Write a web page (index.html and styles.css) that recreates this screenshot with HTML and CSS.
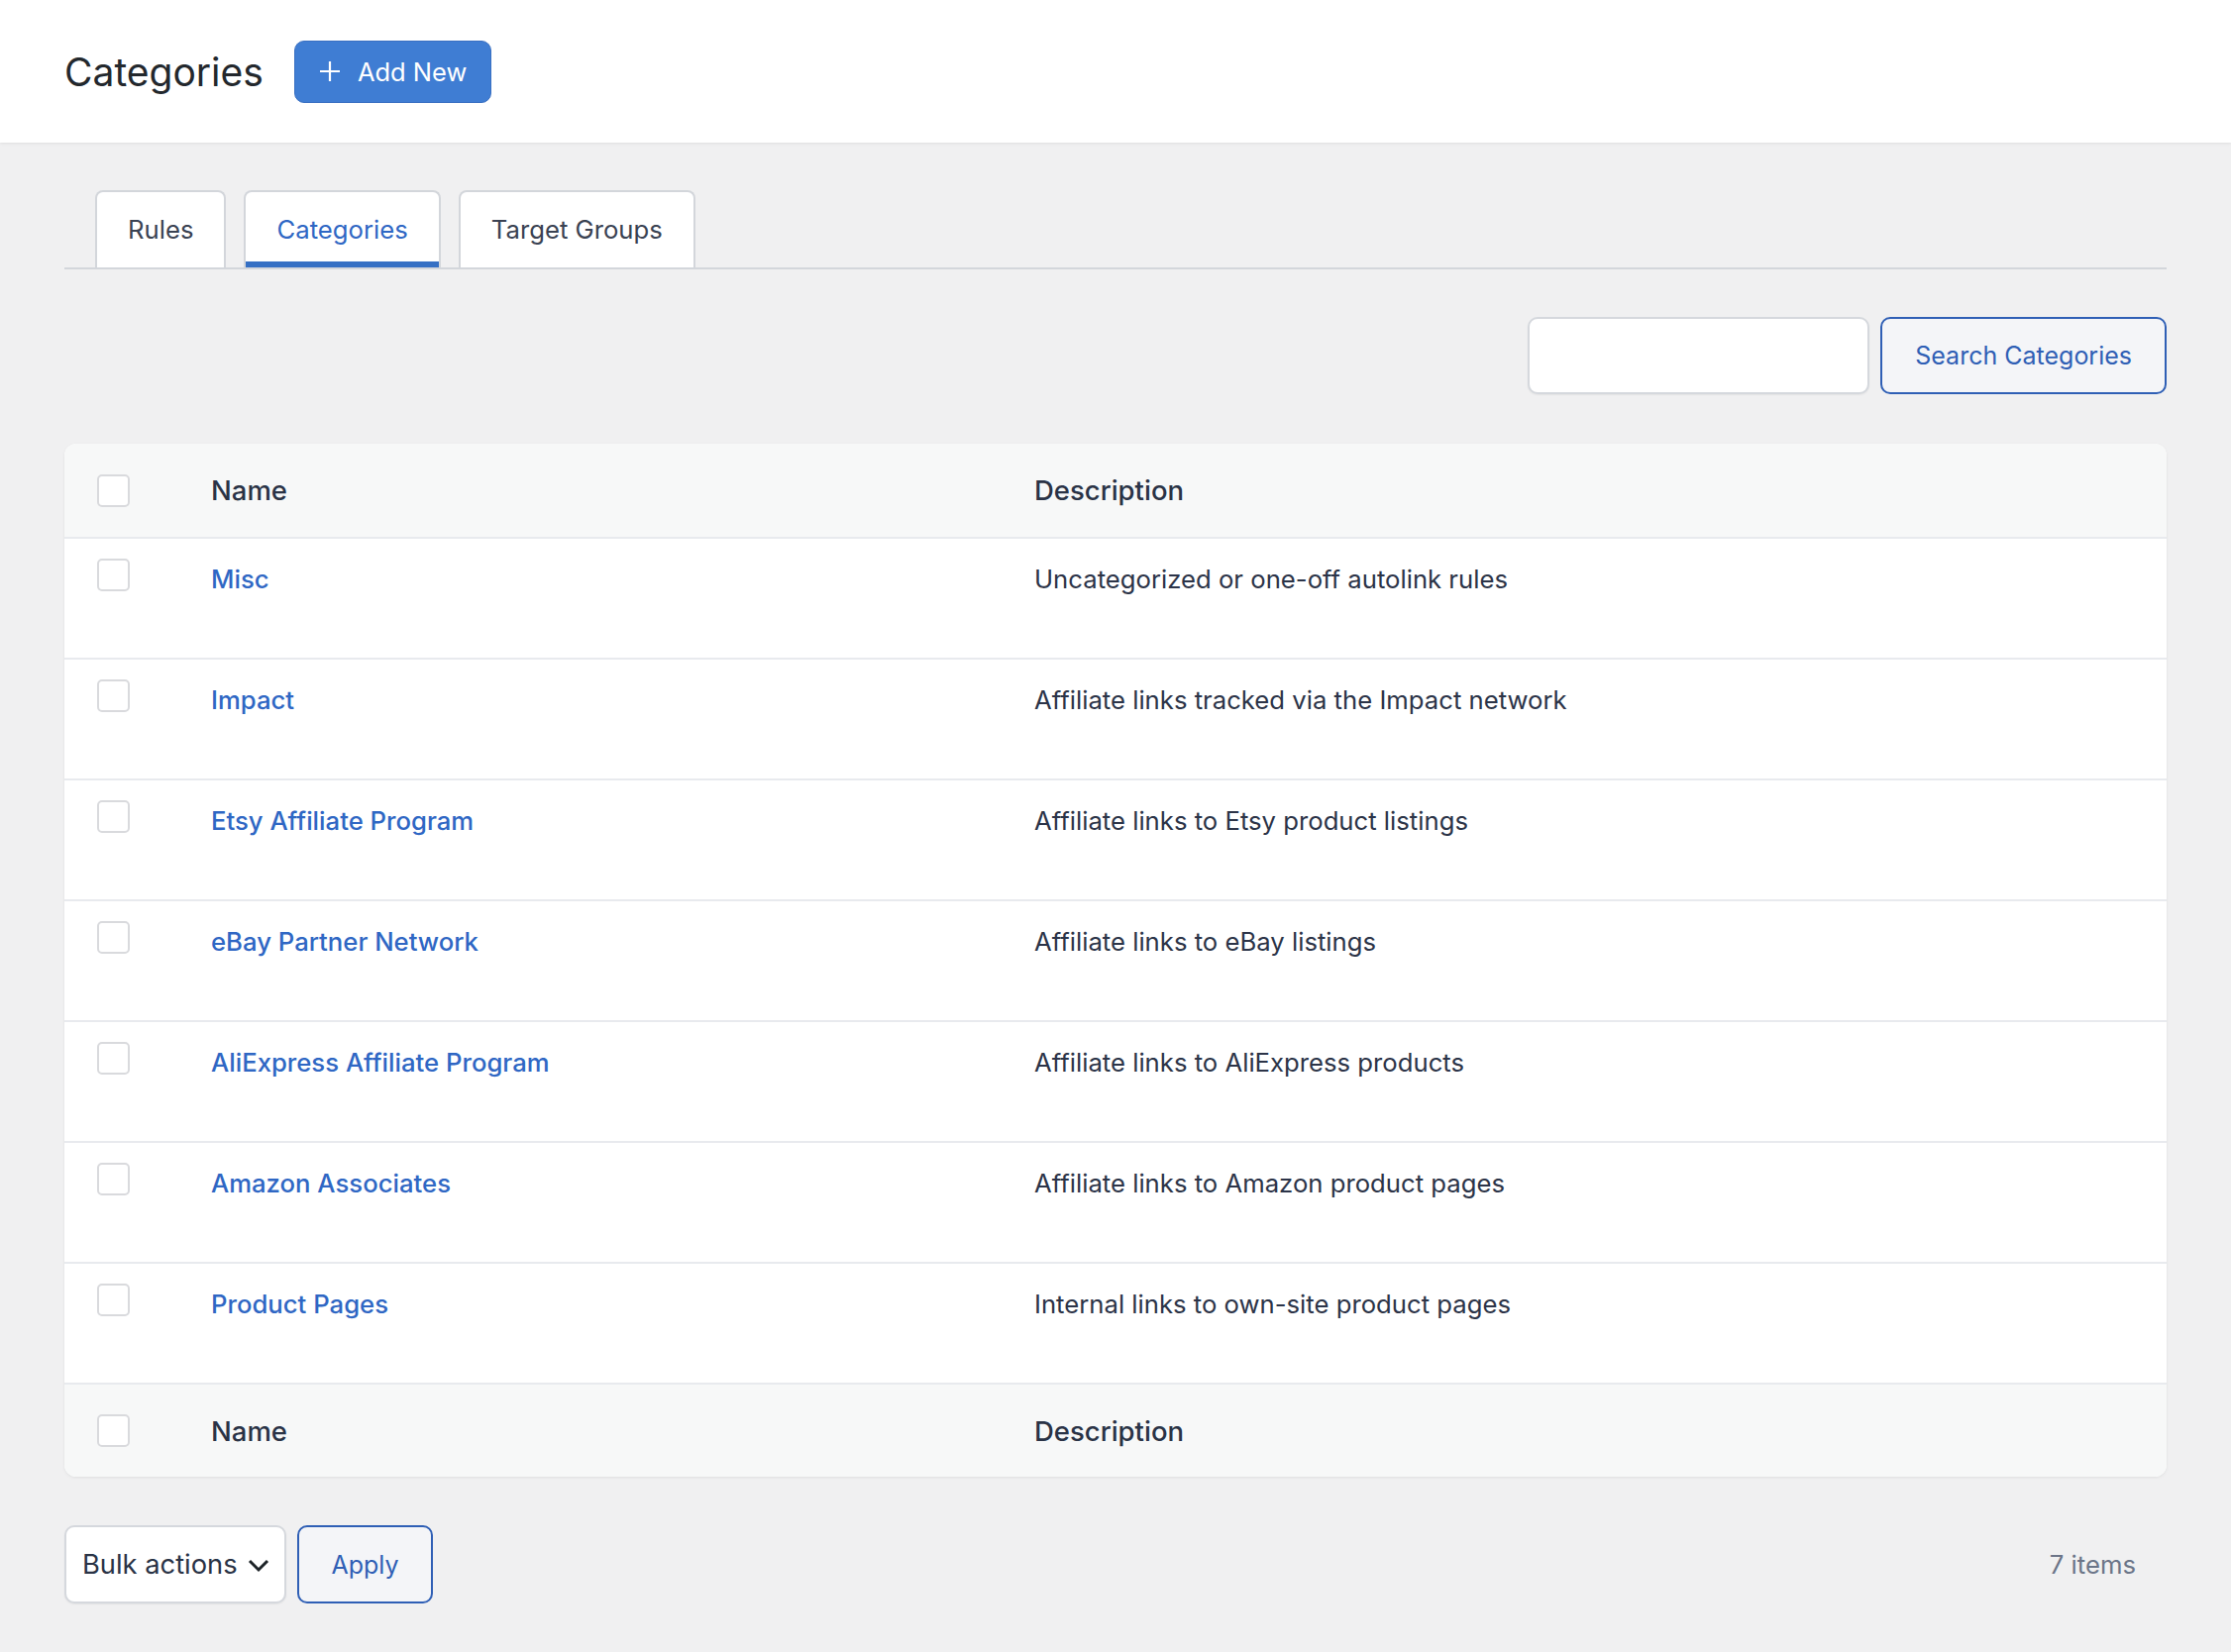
FILE: index.html
```html
<!DOCTYPE html>
<html lang="en">
<head>
  <meta charset="UTF-8" />
  <title>Categories</title>
  <link rel="stylesheet" href="styles.css">
</head>
<body>
  <header class="page-head">
    <h1>Categories</h1>
    <button class="add-new" type="button">
      <svg width="22" height="22" viewBox="0 0 22 22"><path d="M11 1v20M1 11h20" stroke="#fff" stroke-width="2.2" fill="none"/></svg>
      Add New
    </button>
  </header>

  <main class="wrap">
    <nav class="tabs">
      <a class="tab" href="#">Rules</a>
      <a class="tab active" href="#">Categories</a>
      <a class="tab" href="#">Target Groups</a>
    </nav>

    <form class="search-box">
      <input type="search" class="search-input" />
      <button type="button" class="btn-outline">Search Categories</button>
    </form>

    <div class="list-table">
      <div class="row head">
        <div class="cell check"><span class="box"></span></div>
        <div class="cell">Name</div>
        <div class="cell">Description</div>
      </div>

      <div class="row item">
        <div class="cell check"><span class="box"></span></div>
        <div class="cell"><a href="#">Misc</a></div>
        <div class="cell">Uncategorized or one-off autolink rules</div>
      </div>
      <div class="row item">
        <div class="cell check"><span class="box"></span></div>
        <div class="cell"><a href="#">Impact</a></div>
        <div class="cell">Affiliate links tracked via the Impact network</div>
      </div>
      <div class="row item">
        <div class="cell check"><span class="box"></span></div>
        <div class="cell"><a href="#">Etsy Affiliate Program</a></div>
        <div class="cell">Affiliate links to Etsy product listings</div>
      </div>
      <div class="row item">
        <div class="cell check"><span class="box"></span></div>
        <div class="cell"><a href="#">eBay Partner Network</a></div>
        <div class="cell">Affiliate links to eBay listings</div>
      </div>
      <div class="row item">
        <div class="cell check"><span class="box"></span></div>
        <div class="cell"><a href="#">AliExpress Affiliate Program</a></div>
        <div class="cell">Affiliate links to AliExpress products</div>
      </div>
      <div class="row item">
        <div class="cell check"><span class="box"></span></div>
        <div class="cell"><a href="#">Amazon Associates</a></div>
        <div class="cell">Affiliate links to Amazon product pages</div>
      </div>
      <div class="row item">
        <div class="cell check"><span class="box"></span></div>
        <div class="cell"><a href="#">Product Pages</a></div>
        <div class="cell">Internal links to own-site product pages</div>
      </div>

      <div class="row head foot">
        <div class="cell check"><span class="box"></span></div>
        <div class="cell">Name</div>
        <div class="cell">Description</div>
      </div>
    </div>

    <div class="table-nav">
      <div class="bulk">
        <div class="select">
          Bulk actions
          <svg width="24" height="16" viewBox="0 0 24 16"><path d="M3 4l9 9 9-9" stroke="#1d2327" stroke-width="3" fill="none"/></svg>
        </div>
        <button type="button" class="btn-outline apply">Apply</button>
      </div>
      <span class="count">7 items</span>
    </div>
  </main>
</body>
</html>
```

FILE: styles.css
```css
body {
  margin: 0;
  background: #f0f0f1;
  font-family: Inter, "Noto Sans", sans-serif;
  font-size: 25.7px;
  color: #2c3448;
}

.page-head {
  height: 144px;
  background: #fff;
  display: flex;
  align-items: center;
  gap: 31px;
  padding: 0 65px;
  box-shadow: 0 1px 3px rgba(0,0,0,0.08);
}
.page-head h1 {
  margin: 0;
  font-size: 39px;
  font-weight: 400;
  color: #23282d;
}
.add-new {
  display: flex;
  align-items: center;
  gap: 17px;
  height: 63px;
  padding: 0 24px;
  background: #3f7dd3;
  border: 1px solid #3a70c2;
  border-radius: 10px;
  color: #fff;
  font: inherit;
  font-size: 25.5px;
}

.wrap {
  padding: 48px 65px 40px;
}

.tabs {
  display: flex;
  gap: 18px;
  padding-left: 31px;
  border-bottom: 2px solid #d3d6db;
}
.tab {
  display: block;
  height: 76px;
  line-height: 76px;
  padding: 0 31px;
  background: #fff;
  border: 2px solid #d3d6db;
  border-bottom: none;
  border-radius: 8px 8px 0 0;
  color: #3a4252;
  text-decoration: none;
}
.tab.active {
  color: #2f67c4;
  box-shadow: inset 0 -6px 0 #3670c4;
}

.search-box {
  display: flex;
  justify-content: flex-end;
  gap: 11px;
  margin: 48px 0 50px;
}
.search-input {
  width: 345px;
  height: 78px;
  box-sizing: border-box;
  border: 2px solid #d5d8dd;
  border-radius: 10px;
  background: #fff;
  box-shadow: 0 1px 2px rgba(0,0,0,0.06);
}
.btn-outline {
  height: 78px;
  padding: 0 33px;
  background: #f4f5f8;
  border: 2px solid #2f5fb5;
  border-radius: 10px;
  color: #2f5fb5;
  font: inherit;
  font-size: 25px;
}

.list-table {
  background: #fff;
  border-radius: 12px;
  box-shadow: 0 1px 3px rgba(0,0,0,0.08);
  overflow: hidden;
}
.row {
  display: grid;
  grid-template-columns: 148px 831px 1fr;
}
.row.head {
  height: 94px;
  align-items: center;
  background: #f7f8f8;
  font-size: 27.5px;
  font-weight: 500;
  color: #2a3346;
  border-bottom: 2px solid #e8eaee;
}
.row.foot {
  height: 93px;
  border-bottom: none;
}
.row.item {
  height: 120px;
  border-bottom: 2px solid #e8eaee;
  align-items: start;
}
.row.item .cell {
  padding-top: 20px;
  line-height: 42px;
}
.cell.check {
  padding-left: 33px;
}
.row .cell.check {
  line-height: 0;
}
.box {
  display: inline-block;
  width: 29px;
  height: 29px;
  border: 2px solid #d9dadd;
  border-radius: 5px;
  background: #fff;
}
.row.item a {
  color: #2f67c4;
  text-decoration: none;
  font-weight: 500;
}

.table-nav {
  display: flex;
  justify-content: space-between;
  align-items: center;
  margin-top: 49px;
}
.bulk {
  display: flex;
  gap: 11px;
}
.select {
  display: flex;
  align-items: center;
  gap: 9px;
  box-sizing: border-box;
  width: 224px;
  height: 79px;
  padding-left: 16px;
  background: #fff;
  border: 2px solid #d5d8dd;
  border-radius: 10px;
  box-shadow: 0 1px 2px rgba(0,0,0,0.06);
  font-size: 27.3px;
  color: #2a3346;
}
.apply {
  height: 79px;
  width: 137px;
  padding: 0;
}
.count {
  margin-right: 31px;
  color: #6b7588;
}
```
